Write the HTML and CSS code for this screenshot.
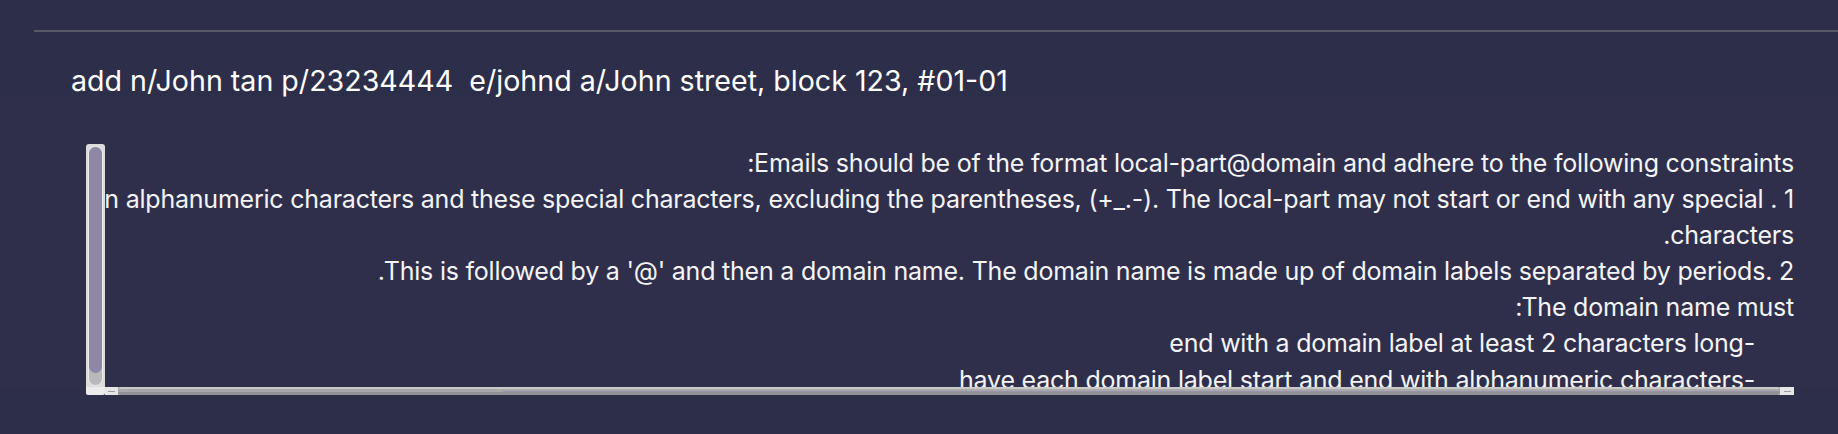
FILE: index.html
```html
<!DOCTYPE html>
<html lang="en">
<head>
<meta charset="utf-8">
<title>Command result</title>
<link rel="stylesheet" href="styles.css">
</head>
<body>
<div class="page">
  <div class="top-rule"><div class="rule"></div></div>
  <div class="command">add n/John tan p/23234444&nbsp; e/johnd a/John street, block 123, #01-01</div>
  <div class="result">
    <div class="textarea">
      <div class="vbar"><div class="vtrack"><div class="vthumb"></div></div></div>
      <div class="content">
        <div class="line"><span dir="ltr">:Emails should be of the format local-part@domain and adhere to the following constraints</span></div>
        <div class="line"><span dir="ltr">The local-part should only contain alphanumeric characters and these special characters, excluding the parentheses, (+_.-). The local-part may not start or end with any special . 1</span></div>
        <div class="line"><span dir="ltr">.characters</span></div>
        <div class="line"><span dir="ltr">.This is followed by a '@' and then a domain name. The domain name is made up of domain labels separated by periods. 2</span></div>
        <div class="line"><span dir="ltr">:The domain name must</span></div>
        <div class="line indent"><span dir="ltr">end with a domain label at least 2 characters long-</span></div>
        <div class="line indent"><span dir="ltr">have each domain label start and end with alphanumeric characters-</span></div>
      </div>
      <div class="corner"></div>
      <div class="hbar">
        <div class="hbtn"><div class="dash"></div></div>
        <div class="hthumb"><div class="hline"></div></div>
        <div class="hbtn"><div class="dash"></div></div>
      </div>
    </div>
  </div>
</div>
</body>
</html>
```
FILE: styles.css
```css
html, body {
  margin: 0;
  padding: 0;
}
body {
  background: #2d2e4a;
  color: #ffffff;
  font-family: "Inter", "Liberation Sans", sans-serif;
  width: 1838px;
  height: 434px;
  overflow: hidden;
}
.page {
  display: flex;
  flex-direction: column;
}
.top-rule {
  padding: 30px 0 0 34px;
}
.rule {
  height: 2px;
  background: #595a67;
}
.command {
  padding: 31px 0 0 71px;
  font-size: 28.6px;
  line-height: 35px;
  letter-spacing: 0;
  white-space: pre;
  color: #ffffff;
  height: 35px;
}
.result {
  padding: 46px 44px 0 86px;
  background: #2f2f4c;
  height: 244px;
}
.textarea {
  display: grid;
  grid-template-columns: 19px 1fr;
  grid-template-rows: 243px 8px;
}
.vbar {
  background: #dcdcdc;
  border-radius: 3px 3px 0 0;
  padding: 2px 2px 1px 2px;
  display: flex;
}
.vtrack {
  flex: 1;
  background: #b9b9b9;
  border: 1px solid #ededed;
  border-radius: 8px;
  display: flex;
  flex-direction: column;
}
.vthumb {
  height: 226px;
  background: #8e88a6;
  border-radius: 7px;
}
.content {
  direction: rtl;
  overflow: hidden;
  font-size: 25px;
  line-height: 36.1px;
  letter-spacing: -0.22px;
  color: #f4f4f6;
  padding-top: 1px;
}
.line {
  white-space: pre;
}
.line.indent {
  padding-right: 39px;
}
.corner {
  background: #ececec;
  border-radius: 0 0 2px 2px;
}
.hbar {
  display: flex;
  background: #a8a8a8;
}
.hbtn {
  width: 13px;
  background: #e6e6e6;
  display: flex;
  align-items: center;
  justify-content: center;
}
.hbtn:last-child {
  width: 14px;
}
.dash {
  width: 7px;
  height: 1px;
  background: #9c9c9c;
}
.hthumb {
  flex: 1;
  background: linear-gradient(#c9c9c9 0, #c9c9c9 2px, #a9a9a9 2px, #a9a9a9 5px, #8f8f98 5px);
  border-radius: 4px;
  display: flex;
  flex-direction: column;
  justify-content: center;
  padding-left: 385px;
}
.hline {
  height: 1px;
  background: #9892ad;
  margin-top: 1px;
}
```
